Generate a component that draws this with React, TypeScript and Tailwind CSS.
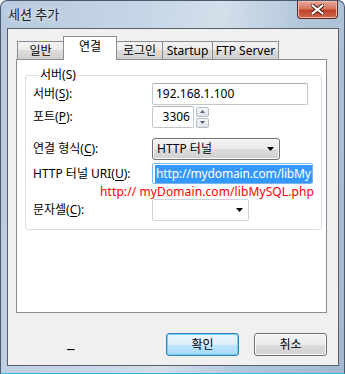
import React from "react";

const FONT = "font-['Noto_Sans','Noto_Sans_CJK_KR',sans-serif]";

const BTN =
  "flex items-center justify-center rounded-[3px] border border-[#707070] bg-[linear-gradient(180deg,#f2f2f2_0%,#ebebeb_50%,#dddddd_50%,#cfcfcf_100%)] shadow-[inset_0_0_0_1px_#fbfbfb]";

const BTN_DEFAULT =
  "flex items-center justify-center rounded-[3px] border border-[#3c7fb1] bg-[linear-gradient(180deg,#eaf6fd_0%,#d9f0fc_50%,#bee6fd_50%,#a7d9f5_100%)] shadow-[inset_0_0_0_1px_#6fd0f5]";

const INPUT =
  "flex items-center rounded-[2px] border border-[#c3c8ce] border-t-[#abadb3] bg-white";

function U({ children }: { children: React.ReactNode }) {
  return <span className="underline underline-offset-2">{children}</span>;
}

function Arrow() {
  return (
    <svg width="7" height="4" viewBox="0 0 7 4">
      <path d="M0 0 H7 L3.5 4 Z" fill="#000" />
    </svg>
  );
}

function SpinArrow({ up }: { up?: boolean }) {
  return (
    <svg width="5" height="3" viewBox="0 0 5 3">
      <path d={up ? "M0 3 H5 L2.5 0 Z" : "M0 0 H5 L2.5 3 Z"} fill="#4d6185" />
    </svg>
  );
}

function Tab({ label, width, active }: { label: string; width: string; active?: boolean }) {
  if (active) {
    return (
      <div
        className={`relative z-10 -mb-px -ml-px flex h-[24px] items-start justify-center border border-b-0 border-[#898c95] bg-white pt-[3px] ${width}`}
      >
        {label}
      </div>
    );
  }
  return (
    <div
      className={`-ml-px flex h-[18px] items-center justify-center border border-b-0 border-[#898c95] bg-[linear-gradient(180deg,#f2f2f2_0%,#ebebeb_50%,#dddddd_50%,#cfcfcf_100%)] ${width}`}
    >
      {label}
    </div>
  );
}

function Row({ label, children, className = "" }: { label: React.ReactNode; children: React.ReactNode; className?: string }) {
  return (
    <div className={`flex items-center ${className}`}>
      <div className="w-[119px] shrink-0">{label}</div>
      {children}
    </div>
  );
}

export default function App() {
  return (
    <div className={`${FONT} text-[12px] leading-[14px] text-black`}>
      <div className="flex h-[374px] w-[345px] flex-col rounded-t-[7px] border border-[#4a5a6e] border-b-[#36b4e6] bg-[linear-gradient(100deg,#b6c9de_0%,#c9d8e7_40%,#d3dfea_55%,#b2c6db_75%,#a3b8cf_100%)]">
        {/* title bar */}
        <div className="flex h-[27px] shrink-0 items-start justify-between">
          <div className="pl-[7px] pt-[6px] text-[13px] text-[#1e1e1e] [text-shadow:0_0_6px_#ffffff]">세션 추가</div>
          <div className="mr-[6px] flex h-[18px] w-[41px] items-center justify-center rounded-b-[4px] border border-t-0 border-[#5b2a22] bg-[linear-gradient(180deg,#e9a99c_0%,#d8765f_45%,#c2412a_55%,#d06a4c_100%)] shadow-[inset_0_0_0_1px_#f0b8a8]">
            <svg width="13" height="11" viewBox="0 0 13 11">
              <path d="M1 1 L12 10 M12 1 L1 10" stroke="#4a1a12" strokeWidth="4" strokeLinecap="square" />
              <path d="M1.5 1.5 L11.5 9.5 M11.5 1.5 L1.5 9.5" stroke="#ffffff" strokeWidth="2" strokeLinecap="square" />
            </svg>
          </div>
        </div>

        {/* client area */}
        <div className="ml-[6px] mr-[5px] flex h-[338px] shrink-0 flex-col border border-[#55606c] bg-[#f0f0f0] pl-[8px] pr-[11px] pt-[7px]">
          <div className="flex h-[23px] items-end pl-[2px]">
            <Tab label="일반" width="w-[47px]" />
            <Tab label="연결" width="w-[54px]" active />
            <Tab label="로그인" width="w-[47px]" />
            <Tab label="Startup" width="w-[51px]" />
            <Tab label="FTP Server" width="w-[67px]" />
          </div>

          <div className="h-[254px] border border-[#898c95] bg-white pl-[8px] pr-[5px] pt-[8px]">
            <fieldset className="rounded-[3px] border border-[#d5dfe5] px-[7px] pb-[8px]">
              <legend className="ml-[6px] px-[1px]">서버(S)</legend>

              <Row label={<>서버(<U>S</U>):</>} className="mt-px h-[22px]">
                <div className={`${INPUT} h-[22px] w-[156px] pl-[3px]`}>192.168.1.100</div>
              </Row>

              <Row label={<>포트(<U>P</U>):</>} className="mt-px h-[22px]">
                <div className={`${INPUT} h-[22px] w-[42px] justify-end pr-[3px]`}>3306</div>
                <div className="ml-[2px] flex h-[22px] w-[13px] flex-col justify-center gap-px">
                  <div className="flex h-[10px] items-center justify-center rounded-[2px] border border-[#b6bcc6] bg-[linear-gradient(180deg,#f6f6f6,#dfe3e8)]">
                    <SpinArrow up />
                  </div>
                  <div className="flex h-[10px] items-center justify-center rounded-[2px] border border-[#b6bcc6] bg-[linear-gradient(180deg,#f6f6f6,#dfe3e8)]">
                    <SpinArrow />
                  </div>
                </div>
              </Row>

              <Row label={<>연결 형식(<U>C</U>):</>} className="mt-[10px] h-[22px]">
                <div className={`${BTN} h-[22px] w-[128px] !justify-between pl-[4px] pr-[5px]`}>
                  <span>HTTP 터널</span>
                  <Arrow />
                </div>
              </Row>

              <Row label={<>HTTP 터널 URI(<U>U</U>):</>} className="mt-[3px] h-[21px]">
                <div className="flex h-[21px] w-[161px] items-center overflow-hidden whitespace-nowrap rounded-[2px] border border-[#7eb4ea] bg-white pl-[2px]">
                  <span className="bg-[#3399ff] px-px py-[2px] tracking-[-0.15px] text-white">http://mydomain.com/libMy</span>
                </div>
              </Row>

              <div className="mt-px h-[14px] whitespace-nowrap pl-[67px] tracking-[0.1px] text-[#ff0000]">http:// myDomain.com/libMySQL.php</div>

              <Row label={<>문자셀(<U>C</U>):</>} className="h-[22px]">
                <div className="flex h-[22px] w-[97px] items-center justify-end rounded-[2px] border border-[#d0d4da] bg-white pr-[5px]">
                  <Arrow />
                </div>
              </Row>
            </fieldset>
          </div>

          <div className="mt-[20px] flex h-[23px] items-center">
            <div className="ml-[51px] -mt-[6px] text-[17px] leading-[17px]">_</div>
            <div className="flex-1" />
            <div className={`${BTN_DEFAULT} h-[23px] w-[73px]`}>확인</div>
            <div className={`${BTN} ml-[15px] h-[23px] w-[73px]`}>취소</div>
          </div>
        </div>
      </div>
    </div>
  );
}
